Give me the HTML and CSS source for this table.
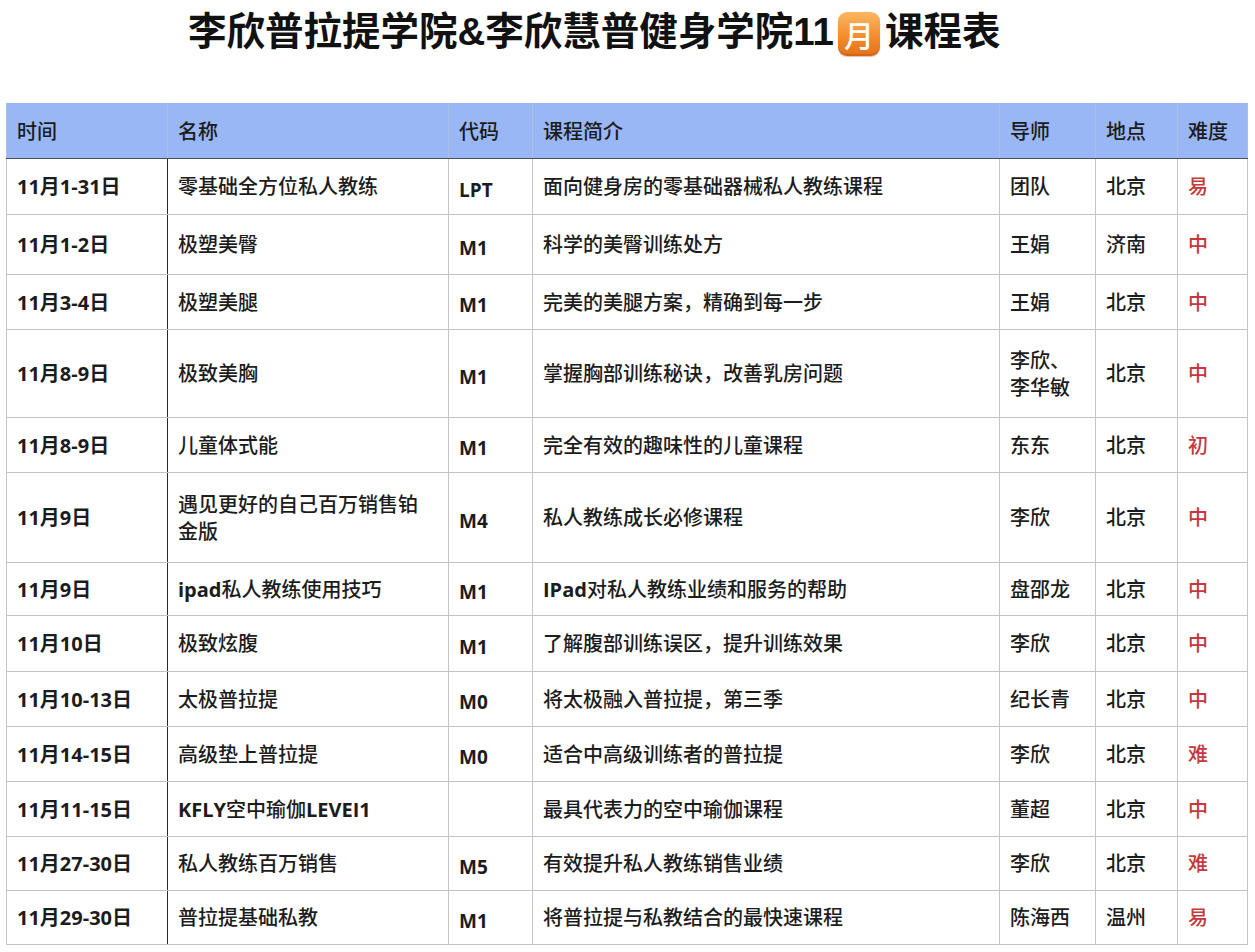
FILE: index.html
```html
<!DOCTYPE html>
<html lang="zh-CN">
<head>
<meta charset="utf-8">
<title>课程表</title>
<link rel="stylesheet" href="styles.css">
</head>
<body>
<div class="title-wrap">
  <h1 class="title">李欣普拉提学院&amp;李欣慧普健身学院11<span class="month">月</span>课程表</h1>
</div>
<table class="schedule">
  <colgroup>
    <col class="c-time"><col class="c-name"><col class="c-code"><col class="c-intro"><col class="c-tutor"><col class="c-place"><col class="c-level">
  </colgroup>
  <thead>
    <tr class="r-55">
      <th class="time">时间</th><th>名称</th><th>代码</th><th>课程简介</th><th>导师</th><th>地点</th><th>难度</th>
    </tr>
  </thead>
  <tbody>
    <tr class="r-56"><td class="time">11月1-31日</td><td>零基础全方位私人教练</td><td class="code">LPT</td><td>面向健身房的零基础器械私人教练课程</td><td>团队</td><td>北京</td><td class="level">易</td></tr>
    <tr class="r-60"><td class="time">11月1-2日</td><td>极塑美臀</td><td class="code">M1</td><td>科学的美臀训练处方</td><td>王娟</td><td>济南</td><td class="level">中</td></tr>
    <tr class="r-55"><td class="time">11月3-4日</td><td>极塑美腿</td><td class="code">M1</td><td>完美的美腿方案，精确到每一步</td><td>王娟</td><td>北京</td><td class="level">中</td></tr>
    <tr class="r-88"><td class="time">11月8-9日</td><td>极致美胸</td><td class="code">M1</td><td>掌握胸部训练秘诀，改善乳房问题</td><td>李欣、<br>李华敏</td><td>北京</td><td class="level">中</td></tr>
    <tr class="r-55"><td class="time">11月8-9日</td><td>儿童体式能</td><td class="code">M1</td><td>完全有效的趣味性的儿童课程</td><td>东东</td><td>北京</td><td class="level">初</td></tr>
    <tr class="r-90"><td class="time">11月9日</td><td>遇见更好的自己百万销售铂<br>金版</td><td class="code">M4</td><td>私人教练成长必修课程</td><td>李欣</td><td>北京</td><td class="level">中</td></tr>
    <tr class="r-53"><td class="time">11月9日</td><td><span class="lat">ipad</span>私人教练使用技巧</td><td class="code">M1</td><td><span class="lat">IPad</span>对私人教练业绩和服务的帮助</td><td>盘邵龙</td><td>北京</td><td class="level">中</td></tr>
    <tr class="r-56"><td class="time">11月10日</td><td>极致炫腹</td><td class="code">M1</td><td>了解腹部训练误区，提升训练效果</td><td>李欣</td><td>北京</td><td class="level">中</td></tr>
    <tr class="r-55"><td class="time">11月10-13日</td><td>太极普拉提</td><td class="code">M0</td><td>将太极融入普拉提，第三季</td><td>纪长青</td><td>北京</td><td class="level">中</td></tr>
    <tr class="r-55"><td class="time">11月14-15日</td><td>高级垫上普拉提</td><td class="code">M0</td><td>适合中高级训练者的普拉提</td><td>李欣</td><td>北京</td><td class="level">难</td></tr>
    <tr class="r-55"><td class="time">11月11-15日</td><td><span class="lat">KFLY</span>空中瑜伽<span class="lat">LEVEI1</span></td><td class="code"></td><td>最具代表力的空中瑜伽课程</td><td>董超</td><td>北京</td><td class="level">中</td></tr>
    <tr class="r-54"><td class="time">11月27-30日</td><td>私人教练百万销售</td><td class="code">M5</td><td>有效提升私人教练销售业绩</td><td>李欣</td><td>北京</td><td class="level">难</td></tr>
    <tr class="r-54"><td class="time">11月29-30日</td><td>普拉提基础私教</td><td class="code">M1</td><td>将普拉提与私教结合的最快速课程</td><td>陈海西</td><td>温州</td><td class="level">易</td></tr>
  </tbody>
</table>
</body>
</html>
```
FILE: styles.css
```css
html, body {
  margin: 0;
  padding: 0;
  background: #ffffff;
}
body {
  font-family: "Open Sans", "Noto Sans CJK SC", sans-serif;
  color: #1c1c1c;
}
.title-wrap {
  height: 103px;
  padding-left: 188px;
  box-sizing: border-box;
}
.title {
  margin: 0;
  padding-top: 9px;
  font-family: "Liberation Sans", "Noto Sans CJK SC", sans-serif;
  font-size: 38.5px;
  font-weight: 700;
  line-height: 46px;
  color: #111;
  white-space: nowrap;
}
.month {
  display: inline-block;
  width: 42px;
  height: 44px;
  margin: 0 5px 0 4px;
  border-radius: 9px;
  background: linear-gradient(180deg, #fbb862 0%, #f38d2e 55%, #e3701b 100%);
  box-shadow: inset 0 -2px 0 rgba(180, 80, 10, 0.35), 0 1px 1px rgba(120, 60, 0, 0.3);
  color: #fff;
  font-family: "Noto Sans CJK SC", sans-serif;
  font-size: 30px;
  font-weight: 500;
  line-height: 44px;
  text-align: center;
  vertical-align: -2px;
}
.schedule {
  margin-left: 6px;
  width: 1241px;
  table-layout: fixed;
  border-collapse: collapse;
  font-size: 20px;
}
.c-time { width: 161px; }
.c-name { width: 281px; }
.c-code { width: 84px; }
.c-intro { width: 467px; }
.c-tutor { width: 96px; }
.c-place { width: 82px; }
.c-level { width: 70px; }
.schedule th,
.schedule td {
  border: 1px solid #c4c4c8;
  padding: 0 6px 0 10px;
  text-align: left;
  vertical-align: middle;
  font-weight: 500;
  line-height: 27px;
  white-space: nowrap;
}
.schedule thead th {
  background: #99b6f5;
  border-color: #aebfe6;
  border-bottom: 1px solid #4a4f5c;
  border-top: 1px solid #9bb5ee;
  font-weight: 500;
  font-size: 20px;
}
.schedule td.time {
  font-weight: 700;
  border-right: 1px solid #2a2a2a;
}
.schedule td.code {
  font-weight: 700;
  font-size: 19px;
  padding-top: 7px;
}
.lat {
  font-weight: 700;
}
.schedule td.level {
  color: #c23a3c;
}
.r-53 { height: 53px; }
.r-54 { height: 54px; }
.r-55 { height: 55px; }
.r-56 { height: 56px; }
.r-60 { height: 60px; }
.r-88 { height: 88px; }
.r-90 { height: 90px; }
```
